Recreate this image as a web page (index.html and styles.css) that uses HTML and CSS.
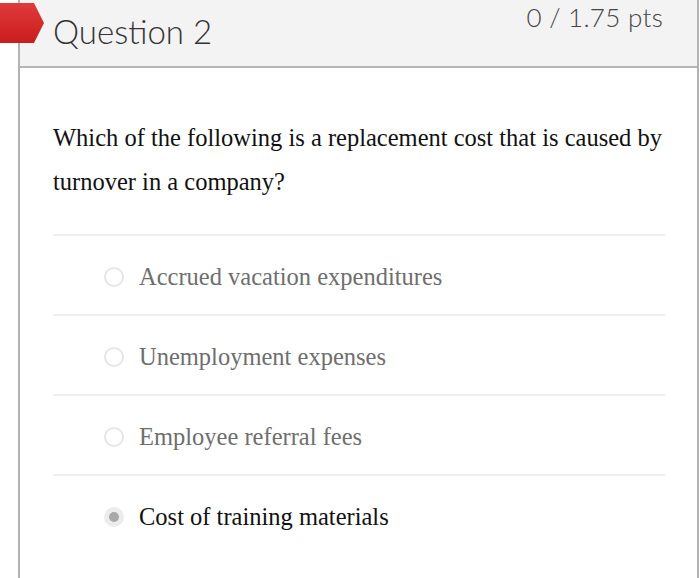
FILE: index.html
```html
<!DOCTYPE html>
<html>
<head>
<meta charset="utf-8">
<link rel="stylesheet" href="styles.css">
</head>
<body>
<div class="quiz">
  <div class="flag"></div>
  <div class="question">
    <div class="q-header">
      <h2 class="q-title">Question 2</h2>
      <div class="q-points">0 / 1.75 pts</div>
    </div>
    <div class="q-body">
      <p class="q-text">Which of the following is a replacement cost that is caused by turnover in a company?</p>
      <div class="answers">
        <div class="answer"><span class="radio"></span><span class="a-text">Accrued vacation expenditures</span></div>
        <div class="answer"><span class="radio"></span><span class="a-text">Unemployment expenses</span></div>
        <div class="answer"><span class="radio"></span><span class="a-text">Employee referral fees</span></div>
        <div class="answer selected"><span class="radio"></span><span class="a-text">Cost of training materials</span></div>
      </div>
    </div>
  </div>
</div>
</body>
</html>
```
FILE: styles.css
```css
html, body {
  margin: 0;
  padding: 0;
  background: #ffffff;
}
body {
  width: 700px;
  height: 578px;
  overflow: hidden;
}
.quiz {
  position: relative;
  padding-left: 18px;
}
.flag {
  position: absolute;
  left: 0;
  top: 3px;
  width: 44px;
  height: 40px;
  background: linear-gradient(#e03a3a, #c91d1d);
  clip-path: polygon(0 0, 34px 0, 44px 50%, 34px 100%, 0 100%);
  z-index: 2;
}
.question {
  width: 677px;
  height: 578px;
  border-left: 2px solid #b3b3b3;
  border-right: 2px solid #b3b3b3;
}
.q-header {
  height: 66px;
  background: #f3f3f3;
  border-bottom: 2px solid #b5b5b5;
  display: flex;
  justify-content: space-between;
  align-items: flex-start;
  padding: 0 34px 0 33px;
}
.q-title {
  margin: 11px 0 0 0;
  font-family: Lato, "Open Sans", sans-serif;
  font-weight: 300;
  font-size: 33px;
  line-height: 40px;
  color: #333;
}
.q-points {
  margin-top: 1px;
  font-family: Lato, "Open Sans", sans-serif;
  font-weight: 300;
  font-size: 26px;
  line-height: 32px;
  color: #444;
  letter-spacing: 0.3px;
}
.q-body {
  padding: 0 32px 0 33px;
}
.q-text {
  margin: 48px 0 0 0;
  font-family: "Liberation Serif", "Times New Roman", serif;
  font-size: 24.5px;
  line-height: 44px;
  color: #111;
  height: 118px;
}
.answers {
  display: flex;
  flex-direction: column;
}
.answer {
  height: 78px;
  border-top: 2px solid #efefef;
  display: flex;
  align-items: center;
  padding-left: 51px;
  padding-top: 4px;
  box-sizing: border-box;
  height: 80px;
  gap: 15px;
}
.radio {
  width: 16px;
  height: 16px;
  border: 2px solid #e6e6e6;
  border-radius: 50%;
  box-sizing: content-box;
  flex: none;
  display: flex;
  align-items: center;
  justify-content: center;
}
.a-text {
  font-family: "Liberation Serif", "Times New Roman", serif;
  font-size: 24.5px;
  color: #6e6e6e;
}
.selected .radio {
  background: #ececec;
  border-color: #ececec;
}
.selected .radio::after {
  content: "";
  width: 10px;
  height: 10px;
  border-radius: 50%;
  background: #a9a9a9;
}
.selected .a-text {
  color: #111;
}
```
